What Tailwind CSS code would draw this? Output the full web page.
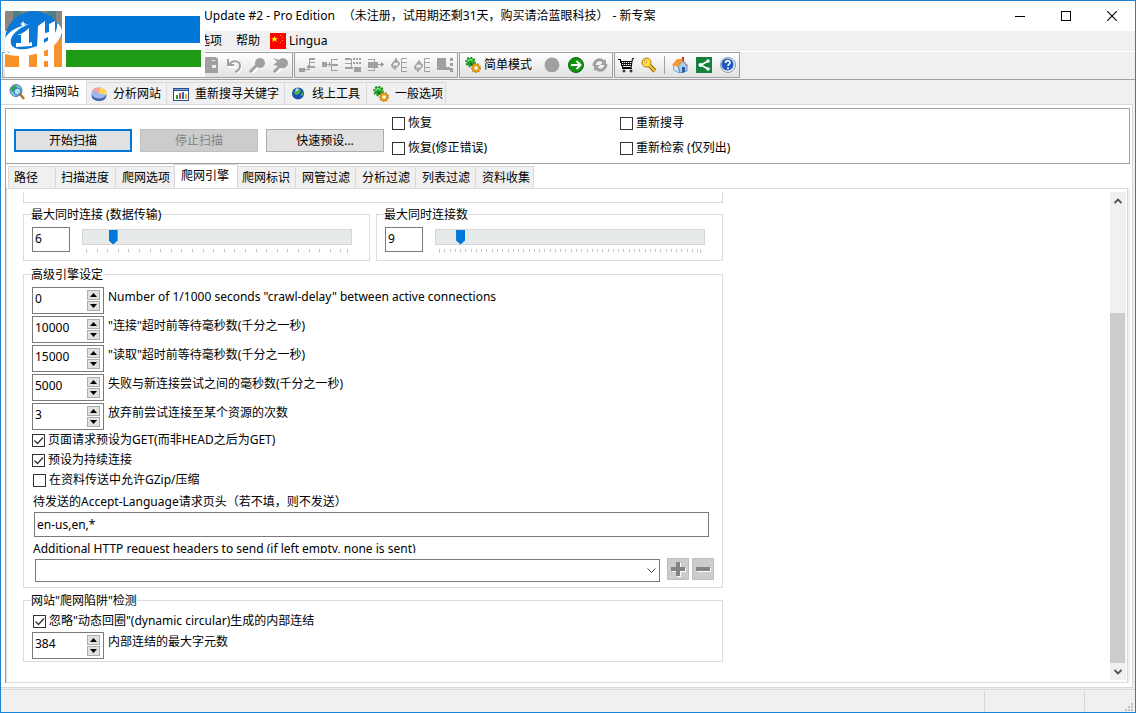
<!DOCTYPE html>
<html lang="zh-CN">
<head>
    <meta charset="UTF-8">
    <meta name="viewport" content="width=device-width, initial-scale=1.0">
    <title>Update #2 - Pro Edition - 新专案</title>
    <script src="https://cdn.jsdelivr.net/npm/@tailwindcss/browser@4"></script>
</head>
<body class="font-['Noto_Sans','Noto_Sans_CJK_SC',sans-serif] text-[12px] leading-4 text-black">
<div class="relative flex min-h-screen flex-col border border-[#1883d7] bg-[#f0f0f0]">

    <!-- title bar -->
    <header class="flex h-[30px] items-center bg-white">
        <h1 class="flex flex-1 gap-2 pl-[203px]"><span>Update #2 - Pro Edition</span><span>（未注册，试用期还剩31天，购买请洽蓝眼科技）</span><span class="-ml-1">- 新专案</span></h1>
        <button type="button" aria-label="最小化" class="grid h-full w-[46px] place-items-center">
            <svg width="10" height="10" shape-rendering="crispEdges"><path d="M0 5.5h10" stroke="#000"/></svg>
        </button>
        <button type="button" aria-label="最大化" class="grid h-full w-[46px] place-items-center">
            <svg width="10" height="10" fill="none" shape-rendering="crispEdges"><path d="M.5.5h9v9h-9z" stroke="#000"/></svg>
        </button>
        <button type="button" aria-label="关闭" class="grid h-full w-[46px] place-items-center">
            <svg width="10" height="10" fill="none"><path d="M0 0l10 10M10 0L0 10" stroke="#000" stroke-width="1.1"/></svg>
        </button>
    </header>

    <!-- menu -->
    <nav class="flex h-5 items-center border-b border-white pl-[197px] box-content">
        <button type="button">选项</button>
        <button type="button" class="ml-[14px]">帮助</button>
        <button type="button" class="ml-[10px] flex items-center gap-[3px]">
            <svg width="16" height="16"><path fill="#f00" d="M0 0h16v16H0z"/><path fill="#ff0" d="M4.500 3l1 2.200h2.300L6 6.700l.7 2.300-2.200-1.400L2.300 9 3 6.700 1.200 5.200h2.300z"/><path fill="#fa0" d="M10 2h1v1h-1zM12 4h1v1h-1zM12 7h1v1h-1zM10 9h1v1h-1z"/></svg>
            <span>Lingua</span>
        </button>
    </nav>

    <!-- toolbar -->
    <div class="flex h-[28px] items-start gap-px border-b border-[#a0a0a0] pl-px">
        <div class="flex h-[26px] w-[291px] items-center justify-end gap-[7px] border border-[#a0a0a0] bg-linear-to-b from-white to-[#e2e2e2] pr-1">
            <button type="button" aria-label="保存" disabled>
                <svg width="16" height="16" fill="#a0a0a0"><path d="M1 2l2-2h10l2 2v14H1z"/><path fill="#eee" d="M9 8h4v3H9zM9 3h3v1H9z"/></svg>
            </button>
            <button type="button" aria-label="撤销" disabled>
                <svg width="16" height="16" fill="none"><path d="M2 2v7h7M3 8c3-5 11-5 11 1 0 3-2 5-6 6" stroke="#fff" stroke-width="2" transform="translate(1 1)"/><path d="M2 2v6h6M3 8c3-5 11-5 11 1 0 3-2 5-5 6" stroke="#a0a0a0" stroke-width="2"/></svg>
            </button>
            <button type="button" aria-label="查找" disabled>
                <svg width="16" height="16"><path d="M2 15l6-6" stroke="#fff" stroke-width="3" transform="translate(1 1)"/><circle cx="11" cy="6" r="5" fill="#a0a0a0"/><path d="M1 15l7-7" stroke="#a0a0a0" stroke-width="3"/></svg>
            </button>
            <button type="button" aria-label="查找下一个" disabled>
                <svg width="16" height="16"><path d="M3 15l6-6" stroke="#fff" stroke-width="3" transform="translate(1 1)"/><path fill="#a0a0a0" d="M1 1l6 2c2-3 9-2 9 3 0 4-4 6-8 5L6 9 1 8l4-3z"/><path d="M2 15l7-7" stroke="#a0a0a0" stroke-width="3"/></svg>
            </button>
        </div>
        <div class="flex h-[26px] w-[164px] items-center gap-[7px] border border-[#a0a0a0] bg-linear-to-b from-white to-[#e2e2e2] pl-1">
            <button type="button" aria-label="展开一" disabled>
                <svg width="16" height="16" fill="#a0a0a0" shape-rendering="crispEdges"><path d="M10 1h6v2h-6zM10 5h6v1h-6zM8 9h8v2H8zM0 11h6v4H0zM6 12h5v1H6zM9 8h1v5H9zM10 2h1v9h-1z"/></svg>
            </button>
            <button type="button" aria-label="展开二" disabled>
                <svg width="16" height="16" fill="#a0a0a0" shape-rendering="crispEdges"><path d="M10 2h6v1h-6zM10 7h6v2h-6zM10 13h6v1h-6zM9 2h1v12H9zM0 5h5v5H0zM5 7h4v1H5zM7 5h1v5H7z"/></svg>
            </button>
            <button type="button" aria-label="展开三" disabled>
                <svg width="16" height="16" fill="#a0a0a0" shape-rendering="crispEdges"><path d="M0 1h6v2H0zM0 6h6v1H0zM0 10h8v2H0zM6 2h1v9H6zM8 1h2v2H8zM11 1h2v2h-2zM14 1h2v2h-2zM8 5h2v2H8zM11 5h2v2h-2zM14 5h2v2h-2zM9 10h7v5H9z"/></svg>
            </button>
            <button type="button" aria-label="移动" disabled>
                <svg width="16" height="16" fill="#a0a0a0" shape-rendering="crispEdges"><path d="M0 2h6v1H0zM0 13h6v1H0zM0 5h10v6H0zM6 2h1v12H6zM10 7h6v1h-6zM13 5h1v5h-1zM14 6h1v3h-1z"/></svg>
            </button>
            <button type="button" aria-label="重载一" disabled>
                <svg width="16" height="16" fill="none" stroke="#a0a0a0"><path stroke-width="1.500" d="M1.500 10V7L4 3.500h2L8 7M0 7.500l2 3h3l3-3V5M5 1v5M4 8v5"/><path d="M16 1.500h-5.500v13H16M10 5.500h6M10 10.500h6"/></svg>
            </button>
            <button type="button" aria-label="重载二" disabled>
                <svg width="16" height="16" fill="none" stroke="#a0a0a0"><path stroke-width="1.500" d="M1.500 12V9L4 5.500h2L8 9M0 9.500l2 3h3l3-3V7M5 3v5M4 10v5"/><path d="M16 1.500h-5.500v13H16M10 5.500h6M10 10.500h6"/></svg>
            </button>
            <button type="button" aria-label="收合" disabled>
                <svg width="16" height="16" fill="#a0a0a0" shape-rendering="crispEdges"><path d="M0 1h9v12H0zM9 10h4v3H9zM13 1h3v3h-3zM13 6h3v3h-3zM13 11h3v4h-3z"/></svg>
            </button>
        </div>
        <div class="flex h-[26px] w-[154px] items-center border border-[#a0a0a0] bg-linear-to-b from-white to-[#e2e2e2] pl-[5px]">
            <button type="button" class="flex items-center gap-[3px]">
                <svg width="16" height="16"><circle cx="5.500" cy="5" r="4" fill="#1fa82a"/><circle cx="5.500" cy="5" r="4.600" fill="none" stroke="#128a1c" stroke-width="1.500" stroke-dasharray="2 1.500"/><path d="M2.500 4.500c1-2.500 4-2.500 5-.5" fill="none" stroke="#8eea7c" stroke-width="1.300"/><path d="M5 6l3 3" stroke="#0b5d12" stroke-width="1.500"/><circle cx="11" cy="11" r="3" fill="#fff" stroke="#e8a021" stroke-width="2.500"/><circle cx="11" cy="11" r="4.300" fill="none" stroke="#b97410" stroke-width="1.300" stroke-dasharray="1.600 1.400"/></svg>
                <span>简单模式</span>
            </button>
            <button type="button" aria-label="停止" disabled class="ml-3">
                <svg width="16" height="16"><circle cx="8.500" cy="8.500" r="7.500" fill="#fff"/><circle cx="8" cy="8" r="7.500" fill="#a0a0a0"/></svg>
            </button>
            <button type="button" aria-label="开始" class="ml-2">
                <svg width="16" height="16"><circle cx="8" cy="8" r="7.500" fill="#12930f" stroke="#0b6a0a"/><path d="M3 8h9M8.500 4l4 4-4 4" fill="none" stroke="#fff" stroke-width="2"/></svg>
            </button>
            <button type="button" aria-label="刷新" disabled class="ml-2">
                <svg width="16" height="16" fill="none" stroke="#a0a0a0" stroke-width="3"><path d="M2 9c0-4 3-7 7-6l4 2M14 7c0 4-3 7-7 6l-4-2"/><path fill="#a0a0a0" stroke="none" d="M14 2v6H8zM2 14V8h6z"/></svg>
            </button>
        </div>
        <div class="flex h-[26px] w-[126px] items-center border border-[#a0a0a0] bg-linear-to-b from-white to-[#e2e2e2] pl-[3px]">
            <button type="button" aria-label="购物车">
                <svg width="16" height="16" fill="none" stroke="#000"><path d="M0 2.500h2l3 9h9M2.500 4.500h11M4 6.500h9.500M4 8.500h9M4.500 10h8.500" shape-rendering="crispEdges"/><path d="M5.500 4v5M7.500 4v5M9.500 4v5M11.500 4v5" stroke-width=".7"/><path d="M13 11l1.500-9.500H16"/><circle cx="6" cy="14" r="1"/><circle cx="13" cy="14" r="1"/></svg>
            </button>
            <button type="button" aria-label="注册码" class="ml-[7px]">
                <svg width="16" height="16"><path d="M8 8l6 6M11 14l2-2" stroke="#8a5a00" stroke-width="4"/><circle cx="5.500" cy="5.500" r="4.500" fill="#ffe14a" stroke="#b07a00"/><path d="M8 8l6 6" stroke="#ffcf30" stroke-width="2"/><circle cx="4.500" cy="4.500" r="1.300" fill="#fff" stroke="#b07a00" stroke-width=".7"/></svg>
            </button>
            <span class="mx-[7px] h-[18px] w-px bg-[#a0a0a0]"></span>
            <a href="#" aria-label="主页">
                <svg width="16" height="16"><path fill="#c22" d="M10 0h2v5h-2z"/><path fill="#d6e8fa" stroke="#5a8cc0" stroke-width=".7" d="M1.500 8l4 0 2 8-6-3z"/><path fill="#a9cdf0" stroke="#3f76b5" stroke-width=".7" d="M6.500 9l4-5 4.500 5v5l-7 2z"/><path fill="#f39a2b" d="M0 8l5-6h6L6 10z"/><path d="M10.500 3L16 9" fill="none" stroke="#e07a26"/><path fill="#34589a" d="M10 10h3v5l-3 1z"/></svg>
            </a>
            <a href="#" aria-label="分享" class="ml-2">
                <svg width="16" height="16"><path fill="#15803a" d="M0 0h16v16H0z"/><path d="M12 4L5 8l7 4" fill="none" stroke="#fff" stroke-width="1.600"/><g fill="#fff"><circle cx="12" cy="4" r="1.800"/><circle cx="4.500" cy="8" r="2"/><circle cx="12" cy="12" r="1.800"/></g></svg>
            </a>
            <a href="#" aria-label="帮助" class="ml-2">
                <svg width="16" height="16"><circle cx="8" cy="8" r="7.500" fill="#e9edf5" stroke="#8a9ab5"/><circle cx="7.500" cy="7.500" r="6" fill="#1d58bd"/><path d="M5.500 6c0-3 4.500-3 4.500-.5 0 1.700-2 1.500-2 3.500M8 10.500v1.800" fill="none" stroke="#fff" stroke-width="1.700"/></svg>
            </a>
        </div>
    </div>

    <!-- main tabs -->
    <div role="tablist" class="flex h-6 items-end">
        <button type="button" role="tab" aria-selected="true" class="-mb-px flex h-[25px] w-[85px] items-center gap-[6px] bg-white pl-2 pb-[2px]">
            <svg width="16" height="16"><circle cx="7" cy="6.500" r="6" fill="#7cc7ee" stroke="#4a7fae"/><path fill="#33a544" d="M2 4l4-3 2 2-3 5-3-1zM9 8l3-2-1 5-2 0z"/><circle cx="8.500" cy="7.500" r="3.500" fill="#c9ecfb" fill-opacity=".7" stroke="#2f6fb0"/><path d="M11 10l4 5" stroke="#b5742a" stroke-width="2.500"/></svg>
            <span>扫描网站</span>
        </button>
        <button type="button" role="tab" class="flex h-[22px] w-20 items-center gap-[6px] border-t border-l border-[#d9d9d9] pl-1">
            <svg width="16" height="16"><ellipse cx="8" cy="9.500" rx="7.500" ry="5.500" fill="#3f63b5"/><ellipse cx="8" cy="7" rx="7.500" ry="5.500" fill="#9db8ea"/><path fill="#f4a0a0" d="M8 7L1 5c1-3 5-4 8-3.500z"/><path fill="#ffd94d" d="M8 7l1-5.500c4 .5 6.500 2.500 6.500 5.500l-1 2z"/></svg>
            <span>分析网站</span>
        </button>
        <button type="button" role="tab" class="flex h-[22px] w-[118px] items-center gap-[6px] border-t border-l border-[#d9d9d9] pl-[6px]">
            <svg width="16" height="16" shape-rendering="crispEdges"><path fill="#2b4f86" d="M0 2h16v13H0z"/><path fill="#6fa4e0" d="M1 3h14v1H1z"/><path fill="#fff" d="M1 5h14v9H1z"/><path fill="#2a9c3a" d="M3 9h2v4H3z"/><path fill="#d9482b" d="M6 7h2v6H6z"/><path fill="#2c62c4" d="M9 6h2v7H9z"/><path fill="#f0b020" d="M12 8h2v5h-2z"/></svg>
            <span>重新搜寻关键字</span>
        </button>
        <button type="button" role="tab" class="flex h-[22px] w-[82px] items-center gap-[6px] border-t border-l border-[#d9d9d9] pl-[5px]">
            <svg width="16" height="16"><circle cx="8" cy="7.500" r="6" fill="#1c4fae"/><path fill="#49b648" d="M5 5l4-2 2 2-2 3-3 1-2-2zM11 8l2-2v3l-2 1z"/><path fill="#bfe3ff" d="M6 2.500h3l-1 2-3 1z"/></svg>
            <span>线上工具</span>
        </button>
        <button type="button" role="tab" class="flex h-[22px] w-20 items-center gap-[6px] border-x border-t border-[#d9d9d9] pl-[6px]">
            <svg width="16" height="16" class="shrink-0"><circle cx="5.500" cy="5" r="4" fill="#1fa82a"/><circle cx="5.500" cy="5" r="4.600" fill="none" stroke="#128a1c" stroke-width="1.500" stroke-dasharray="2 1.500"/><path d="M2.500 4.500c1-2.500 4-2.500 5-.5" fill="none" stroke="#8eea7c" stroke-width="1.300"/><path d="M5 6l3 3" stroke="#0b5d12" stroke-width="1.500"/><circle cx="11" cy="11" r="3" fill="#fff" stroke="#e8a021" stroke-width="2.500"/><circle cx="11" cy="11" r="4.300" fill="none" stroke="#b97410" stroke-width="1.300" stroke-dasharray="1.600 1.400"/></svg>
            <span class="whitespace-nowrap">一般选项</span>
        </button>
    </div>

    <main class="mr-[2px] flex flex-1 flex-col border border-l-0 border-[#d9d9d9] bg-white pt-[3px] pr-[2px] pb-1 pl-1">

        <!-- scan controls -->
        <section class="flex h-14 border border-[#a0a0a0] pl-2">
            <div class="flex gap-2 pt-5">
                <button type="button" class="h-[23px] w-[118px] border-2 border-[#0078d7] bg-[#e1e1e1]">开始扫描</button>
                <button type="button" disabled class="h-[23px] w-[118px] border border-[#bfbfbf] bg-[#ccc] text-[#838383]">停止扫描</button>
                <button type="button" class="h-[23px] w-[118px] border border-[#adadad] bg-[#e1e1e1]">快速预设...</button>
            </div>
            <div class="ml-2 grid grid-cols-[228px_auto] content-start gap-y-[9px] pt-[6px]">
                <label class="flex items-center gap-[3px]"><input type="checkbox" class="size-[13px] appearance-none border border-[#333] bg-white">恢复</label>
                <label class="flex items-center gap-[3px]"><input type="checkbox" class="size-[13px] appearance-none border border-[#333] bg-white">重新搜寻</label>
                <label class="flex items-center gap-[3px]"><input type="checkbox" class="size-[13px] appearance-none border border-[#333] bg-white">恢复(修正错误)</label>
                <label class="flex items-center gap-[3px]"><input type="checkbox" class="size-[13px] appearance-none border border-[#333] bg-white">重新检索 (仅列出)</label>
            </div>
        </section>

        <div class="flex flex-1 flex-col border-l border-[#a0a0a0]">
            <!-- option tabs -->
            <div role="tablist" class="flex h-6 items-end pl-[2px]">
                <button type="button" role="tab" class="h-[22px] w-[47px] border-t border-l border-[#d9d9d9] bg-[#f0f0f0] pl-[5px] text-left">路径</button>
                <button type="button" role="tab" class="h-[22px] w-[60px] border-t border-l border-[#d9d9d9] bg-[#f0f0f0] pl-[5px] text-left">扫描进度</button>
                <button type="button" role="tab" class="h-[22px] w-[59px] border-t border-l border-[#d9d9d9] bg-[#f0f0f0] pl-[6px] text-left">爬网选项</button>
                <button type="button" role="tab" aria-selected="true" class="-mb-px h-[25px] w-16 border-x border-t border-[#d9d9d9] bg-white pl-[6px] pb-[2px] text-left">爬网引擎</button>
                <button type="button" role="tab" class="h-[22px] w-[57px] border-t border-[#d9d9d9] bg-[#f0f0f0] pl-1 text-left">爬网标识</button>
                <button type="button" role="tab" class="h-[22px] w-[60px] border-t border-l border-[#d9d9d9] bg-[#f0f0f0] pl-[6px] text-left">网管过滤</button>
                <button type="button" role="tab" class="h-[22px] w-[60px] border-t border-l border-[#d9d9d9] bg-[#f0f0f0] pl-[6px] text-left">分析过滤</button>
                <button type="button" role="tab" class="h-[22px] w-[60px] border-t border-l border-[#d9d9d9] bg-[#f0f0f0] pl-[6px] text-left">列表过滤</button>
                <button type="button" role="tab" class="h-[22px] w-[59px] border-x border-t border-[#d9d9d9] bg-[#f0f0f0] pl-[6px] text-left">资料收集</button>
            </div>

            <div class="flex flex-1 border-r-2 border-[#f0f0f0]">
            <div class="flex flex-1 border border-[#d9d9d9] pt-[3px] pr-px pb-[2px]">
                <form class="flex-1 pl-4">
                    <div class="h-[11px] w-[700px] border-x border-b border-[#dcdcdc]"></div>

                    <div class="mt-[5px] grid w-[700px] grid-cols-2 gap-[6px]">
                        <fieldset class="border border-[#dcdcdc]">
                            <legend class="ml-[7px] leading-[13px]">最大同时连接 (数据传输)</legend>
                            <div class="flex gap-3 pt-[6px] pr-[17px] pb-[7px] pl-2">
                                <input type="text" value="6" aria-label="最大同时连接" class="h-[25px] w-[38px] border border-[#7a7a7a] px-[2px] pb-[2px]">
                                <div class="flex-1 pt-[2px]">
                                    <input type="range" min="1" max="50" value="6" aria-label="最大同时连接 (数据传输)" class="block h-4 w-full appearance-none border-y border-[#d6d6d6] bg-[#e7eaea] shadow-[inset_1px_0_#d6d6d6,inset_-1px_0_#d6d6d6] [&::-webkit-slider-thumb]:h-[15px] [&::-webkit-slider-thumb]:w-[9px] [&::-webkit-slider-thumb]:appearance-none [&::-webkit-slider-thumb]:bg-[#0078d7] [&::-webkit-slider-thumb]:[clip-path:polygon(0_0,100%_0,100%_11px,50%_100%,0_11px)]">
                                    <svg width="262" height="4" class="mt-1 ml-1" shape-rendering="crispEdges" stroke="#c4c4c4"><path d="M0 1.500h262" stroke-width="3" stroke-dasharray="1 9.600"/><path d="M.5 0v4M261.500 0v4"/></svg>
                                </div>
                            </div>
                        </fieldset>
                        <fieldset class="border border-[#dcdcdc]">
                            <legend class="ml-[7px] leading-[13px]">最大同时连接数</legend>
                            <div class="flex gap-3 pt-[6px] pr-[17px] pb-[7px] pl-2">
                                <input type="text" value="9" aria-label="连接数" class="h-[25px] w-[38px] border border-[#7a7a7a] px-[2px] pb-[2px]">
                                <div class="flex-1 pt-[2px]">
                                    <input type="range" min="1" max="100" value="9" aria-label="最大同时连接数" class="block h-4 w-full appearance-none border-y border-[#d6d6d6] bg-[#e7eaea] shadow-[inset_1px_0_#d6d6d6,inset_-1px_0_#d6d6d6] [&::-webkit-slider-thumb]:h-[15px] [&::-webkit-slider-thumb]:w-[9px] [&::-webkit-slider-thumb]:appearance-none [&::-webkit-slider-thumb]:bg-[#0078d7] [&::-webkit-slider-thumb]:[clip-path:polygon(0_0,100%_0,100%_11px,50%_100%,0_11px)]">
                                    <svg width="262" height="4" class="mt-1 ml-1" shape-rendering="crispEdges" stroke="#c4c4c4"><path d="M0 1.500h262" stroke-width="3" stroke-dasharray="1 4.270"/><path d="M.5 0v4M261.500 0v4"/></svg>
                                </div>
                            </div>
                        </fieldset>
                    </div>

                    <fieldset class="mt-[7px] w-[700px] border border-[#dcdcdc]">
                        <legend class="ml-[7px] leading-[13px]">高级引擎设定</legend>
                        <div class="px-2 pt-[6px] pb-[5px]">
                            <div id="timeouts" class="flex flex-col gap-[2px]"></div>
                            <label class="flex h-5 items-center gap-[3px]">
                                <span class="grid"><input type="checkbox" checked class="peer size-[13px] appearance-none border border-[#333] bg-white [grid-area:1/1]"><svg width="13" height="13" class="pointer-events-none invisible [grid-area:1/1] peer-checked:visible"><path d="M2.500 6.500l3 3 5.500-6" fill="none" stroke="#333" stroke-width="1.300"/></svg></span>
                                页面请求预设为GET(而非HEAD之后为GET)
                            </label>
                            <label class="flex h-5 items-center gap-[3px]">
                                <span class="grid"><input type="checkbox" checked class="peer size-[13px] appearance-none border border-[#333] bg-white [grid-area:1/1]"><svg width="13" height="13" class="pointer-events-none invisible [grid-area:1/1] peer-checked:visible"><path d="M2.500 6.500l3 3 5.500-6" fill="none" stroke="#333" stroke-width="1.300"/></svg></span>
                                预设为持续连接
                            </label>
                            <label class="flex h-5 items-center gap-[3px] pl-px">
                                <input type="checkbox" class="size-[13px] appearance-none border border-[#333] bg-white">
                                在资料传送中允许GZip/压缩
                            </label>
                            <label for="acceptLanguage" class="mt-1 block pl-px">待发送的Accept-Language请求页头（若不填，则不发送）</label>
                            <input id="acceptLanguage" type="text" value="en-us,en,*" class="mt-[2px] ml-[2px] block h-[25px] w-[675px] border border-[#7a7a7a] px-[2px]">
                            <label for="extraHeaders" class="mt-[3px] block h-[13px] overflow-hidden pl-px leading-[18px]">Additional HTTP request headers to send (if left empty, none is sent)</label>
                            <div class="mt-[5px] flex items-start pl-[3px]">
                                <div class="mt-px grid flex-1 items-center">
                                    <select id="extraHeaders" class="h-[23px] w-full appearance-none border border-[#7a7a7a] bg-white [grid-area:1/1]"><option></option></select>
                                    <svg width="9" height="6" class="pointer-events-none mr-1 justify-self-end [grid-area:1/1]"><path d="M.5.5l4 4 4-4" fill="none" stroke="#444"/></svg>
                                </div>
                                <button type="button" aria-label="添加" disabled class="ml-[7px] grid size-[22px] place-items-center border border-[#bfbfbf] bg-[#ccc]">
                                    <svg width="16" height="16" shape-rendering="crispEdges"><path fill="#fff" d="M7 2h4v5h5v4h-5v5H7v-5H2V7h5z"/><path fill="#838383" d="M6 1h4v5h5v4h-5v5H6v-5H1V6h5z"/></svg>
                                </button>
                                <button type="button" aria-label="移除" disabled class="ml-[3px] grid size-[22px] place-items-center border border-[#bfbfbf] bg-[#ccc]">
                                    <svg width="16" height="16" shape-rendering="crispEdges"><path fill="#fff" d="M2 7h14v4H2z"/><path fill="#838383" d="M1 6h14v4H1z"/></svg>
                                </button>
                            </div>
                        </div>
                    </fieldset>

                    <fieldset class="mt-[6px] w-[700px] border border-[#dcdcdc]">
                        <legend class="ml-[7px] leading-[13px]">网站"爬网陷阱"检测</legend>
                        <div class="px-2 pt-1 pb-[2px]">
                            <label class="flex h-5 items-center gap-[3px] pl-px">
                                <span class="grid"><input type="checkbox" checked class="peer size-[13px] appearance-none border border-[#333] bg-white [grid-area:1/1]"><svg width="13" height="13" class="pointer-events-none invisible [grid-area:1/1] peer-checked:visible"><path d="M2.500 6.500l3 3 5.500-6" fill="none" stroke="#333" stroke-width="1.300"/></svg></span>
                                忽略"动态回圈"(dynamic circular)生成的内部连结
                            </label>
                            <div id="traps" class="mt-px flex flex-col gap-[2px]"></div>
                        </div>
                    </fieldset>
                </form>

                <!-- scrollbar -->
                <div class="flex w-4 flex-col bg-[#f0f0f0]">
                    <button type="button" aria-label="向上滚动" class="grid h-[17px] place-items-center">
                        <svg width="8" height="6"><path d="M.5 5L4 1.500 7.500 5" fill="none" stroke="#505050" stroke-width="1.800"/></svg>
                    </button>
                    <div class="flex flex-1 flex-col justify-end">
                        <div class="mr-px h-[77%] bg-[#cdcdcd]"></div>
                    </div>
                    <button type="button" aria-label="向下滚动" class="grid h-[17px] place-items-center">
                        <svg width="8" height="6"><path d="M.5 1L4 4.500 7.500 1" fill="none" stroke="#505050" stroke-width="1.800"/></svg>
                    </button>
                </div>
            </div>
            </div>
        </div>
    </main>

    <!-- status bar -->
    <footer class="mt-px flex h-[23px] border-t border-[#d7d7d7] pt-px">
        <div class="flex-1"></div>
        <div class="mb-px w-[100px] border-l border-[#d7d7d7]"></div>
        <div class="mb-px flex w-[51px] items-end justify-end border-l border-[#d7d7d7] pr-[2px]">
            <svg width="8" height="8" fill="#bfbfbf" shape-rendering="crispEdges"><path d="M6 0h2v2H6zM3 3h2v2H3zM6 3h2v2H6zM0 6h2v2H0zM3 6h2v2H3zM6 6h2v2H6z"/></svg>
        </div>
    </footer>

    <!-- site badge -->
    <div class="absolute top-[10px] left-1 flex h-[66px] w-[200px] bg-white">
        <svg width="57" height="56" viewBox="0 0 57 56">
            <path fill="#8b8680" d="M0 0h57v20H0z"/>
            <path fill="#4d7f86" d="M8 0h8v14H8zM42 0h9v16h-9z"/>
            <path fill="#fff" d="M0 20h57v36H0z"/>
            <circle cx="29" cy="29" r="29" fill="#0a78d6"/>
            <path fill="#fff" d="M0 42h57v14H0z"/>
            <!-- lower orange part -->
            <path fill="#f8922a" d="M0 43c18 5 43 1 57-18v31H0z"/>
            <!-- swoosh -->
            <path fill="#fff" d="M0 27C5 19 14 15 24 13 12 18 4 25 6 33c3 8 19 6 31 0 10-5 16-12 15-21 3 2 5 5 5 9-2 13-18 22-35 23C10 45 0 42 0 36z"/>
            <!-- mark -->
            <path fill="#fff" d="M24 17v15l3-1v4l-16 1v-4h5v-8h-4c5-1 9-4 12-7zM33 15l7-5v12l4-1V13l6-3v15c-2 3-4 5-7 7v-6l-4 2v7l-7 2z"/>
            <path fill="#fff" d="M14 42h10v14H14zM32 41l7-3v7h4v-9l6-4v24h-6v-6h-4v6h-7z"/>
            <path fill="#fff" d="M18 10l1 2 2 1-2 1-1 2-1-2-2-1 2-1z"/>
        </svg>
        <div class="ml-[3px]">
            <div class="mt-[5px] h-[27px] w-[135px] bg-[#0078d7]"></div>
            <div class="mt-[7px] ml-px h-[17px] w-[135px] bg-[#1e9a14]"></div>
        </div>
    </div>
</div>

<script>
    const timeouts = [
        ['0', 'Number of 1/1000 seconds "crawl-delay" between active connections'],
        ['10000', '"连接"超时前等待毫秒数(千分之一秒)'],
        ['15000', '"读取"超时前等待毫秒数(千分之一秒)'],
        ['5000', '失败与新连接尝试之间的毫秒数(千分之一秒)'],
        ['3', '放弃前尝试连接至某个资源的次数'],
    ];
    const traps = [['384', '内部连结的最大字元数']];

    function addSpinners(id, rows) {
        document.getElementById(id).innerHTML = rows.map(([value, label], i) => `
            <div class="flex items-start gap-1">
                <div class="flex h-[27px] w-[72px] border border-[#7a7a7a] bg-white pr-[3px]">
                    <input id="${id}${i}" type="text" inputmode="numeric" value="${value}" class="h-[21px] w-0 flex-1 px-[2px]">
                    <div class="flex flex-col gap-px pt-[2px]">
                        <button type="button" aria-label="增加" class="grid h-[10px] w-[13px] place-items-center border border-[#adadad] bg-[#e1e1e1]">
                            <svg width="7" height="4"><path d="M0 4l3.500-4L7 4z"/></svg>
                        </button>
                        <button type="button" aria-label="减少" class="grid h-[10px] w-[13px] place-items-center border border-[#adadad] bg-[#e1e1e1]">
                            <svg width="7" height="4"><path d="M0 0l3.500 4L7 0z"/></svg>
                        </button>
                    </div>
                </div>
                <label for="${id}${i}" class="leading-5">${label}</label>
            </div>`).join('');
    }

    addSpinners('timeouts', timeouts);
    addSpinners('traps', traps);
</script>
</body>
</html>
